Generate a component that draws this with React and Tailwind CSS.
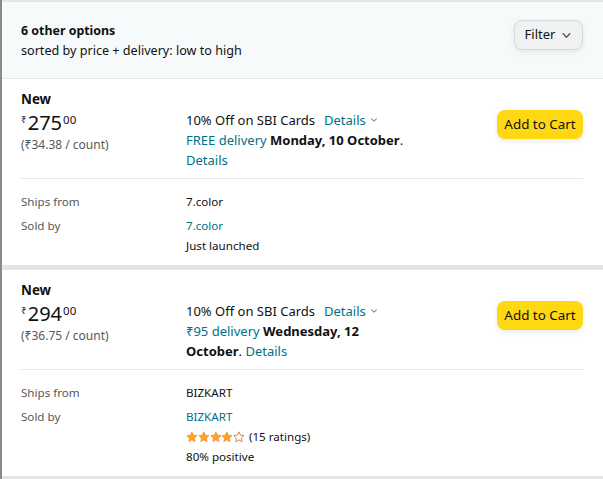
import React from "react";

const Star = ({ filled }) => (
  <svg width="11.8" height="12" viewBox="0 0 24 24">
    <path
      d="M12 1.5l3.2 6.8 7.3.9-5.4 5.1 1.4 7.3L12 18l-6.5 3.6 1.4-7.3-5.4-5.1 7.3-.9z"
      fill={filled ? "#ffa41c" : "none"}
      stroke="#de7921"
      strokeWidth={filled ? 1 : 1.8}
      strokeLinejoin="round"
    />
  </svg>
);

const Chevron = ({ className }) => (
  <svg viewBox="0 0 10 10" className={className}>
    <path d="M2 3.5l3 3 3-3" fill="none" stroke="currentColor" strokeWidth="1.3" strokeLinecap="round" strokeLinejoin="round" />
  </svg>
);

function Offer({ top, price, perCount, delivery, ships, sold, soldExtra }) {
  return (
    <div className={"bg-white pl-[19px] pr-[20px] " + top}>
      <div className="flex">
        <div className="w-[165px] shrink-0">
          <div className="text-[13.4px] font-bold leading-[20px] text-[#0f1111]">New</div>
          <div className="flex items-start text-[#0f1111] mt-[1px] h-[26px]">
            <span className="text-[10px] leading-none mt-[4px] mr-[1px]">₹</span>
            <span className="text-[20px] leading-[26px]">{price}</span>
            <span className="text-[11.5px] leading-none mt-[4px] ml-[1px]">00</span>
          </div>
          <div className="text-[12px] leading-[16px] text-[#565959] mt-[1px]">{perCount}</div>
        </div>
        <div className="w-[232px] shrink-0 pt-[21px] text-[13px] leading-[20px] text-[#0f1111]">
          <div className="flex items-center">
            <span>10% Off on SBI Cards</span>
            <span className="ml-[9px] text-[#007185]">Details</span>
            <Chevron className="w-[8px] h-[8px] ml-[4px] text-[#888c8c]" />
          </div>
          {delivery}
        </div>
        <div className="flex-1 flex justify-end pt-[21px]">
          <div className="h-[29px] w-[86px] rounded-[8px] bg-[#ffd814] shadow-[0_2px_5px_0_rgba(213,217,217,0.5)] flex items-center justify-center text-[13.4px] text-[#0f1111]">
            Add to Cart
          </div>
        </div>
      </div>
      <div className="mt-[8px] h-px bg-[#e7e7e7]" />
      <div className="pt-[13px] pb-[9px] text-[11.6px] leading-[20px]">
        <div className="flex">
          <div className="w-[165px] text-[#565959]">Ships from</div>
          <div className="text-[#0f1111]">{ships}</div>
        </div>
        <div className="flex mt-[4px]">
          <div className="w-[165px] text-[#565959]">Sold by</div>
          <div className="text-[#0f1111]">
            <div className="text-[#007185]">{sold}</div>
            {soldExtra}
          </div>
        </div>
      </div>
    </div>
  );
}

export default function App() {
  return (
    <div
      className="w-[603px] h-[479px] overflow-hidden bg-[#e3e6e6] border-l-[2px] border-[#8a8a8a] flex flex-col"
      style={{ fontFamily: '"Noto Sans", Arial, sans-serif' }}
    >
      <div className="mt-[2px] h-[77px] shrink-0 bg-[#f7fafa] border-b border-[#e3e6e6] flex items-start justify-between pl-[19px] pr-[20px]">
        <div className="pt-[19px]">
          <div className="text-[12.4px] font-bold leading-[20px] text-[#0f1111]">6 other options</div>
          <div className="text-[12.6px] leading-[19px] text-[#0f1111]">sorted by price + delivery: low to high</div>
        </div>
        <div className="mt-[18px] h-[30px] w-[69px] rounded-[8px] bg-[#f0f2f2] border border-[#d5d9d9] shadow-[0_2px_5px_0_rgba(213,217,217,0.5)] flex items-center justify-center text-[13px] text-[#0f1111]">
          Filter
          <Chevron className="w-[11px] h-[11px] ml-[6px] text-[#555]" />
        </div>
      </div>
      <Offer
        top="pt-[10px]"
        price="275"
        perCount="(₹34.38 / count)"
        delivery={
          <div>
            <span className="text-[#007185]">FREE delivery</span>{" "}
            <span className="font-bold">Monday, 10 October</span>.{" "}
            <span className="text-[#007185]">Details</span>
          </div>
        }
        ships="7.color"
        sold="7.color"
        soldExtra={<div>Just launched</div>}
      />
      <div className="h-[5px] shrink-0" />
      <Offer
        top="pt-[10px]"
        price="294"
        perCount="(₹36.75 / count)"
        delivery={
          <div>
            <span className="text-[#007185]">₹95 delivery</span>{" "}
            <span className="font-bold">Wednesday, 12</span>{" "}
            <span className="font-bold">October</span>.{" "}
            <span className="text-[#007185]">Details</span>
          </div>
        }
        ships="BIZKART"
        sold="BIZKART"
        soldExtra={
          <>
            <div className="flex items-center">
              <Star filled />
              <Star filled />
              <Star filled />
              <Star filled />
              <Star />
              <span className="ml-[4px]">(15 ratings)</span>
            </div>
            <div>80% positive</div>
          </>
        }
      />
    </div>
  );
}
